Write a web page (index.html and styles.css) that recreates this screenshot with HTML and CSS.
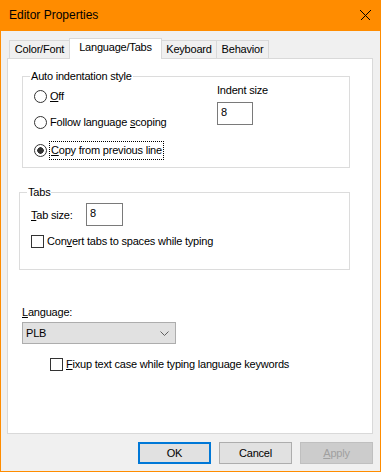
FILE: index.html
```html
<!DOCTYPE html>
<html lang="en">
<head>
  <meta charset="UTF-8" />
  <title>Editor Properties</title>
  <link rel="stylesheet" href="styles.css">
</head>
<body>
  <div class="window">
    <div class="titlebar">
      <span class="title">Editor Properties</span>
      <svg class="close" width="11" height="11" viewBox="0 0 11 11">
        <path d="M0.5 0.5L10.5 10.5M10.5 0.5L0.5 10.5" stroke="#000" stroke-width="1" shape-rendering="crispEdges" />
      </svg>
    </div>

    <div class="client">
      <div class="tabs">
        <div class="tab tab-color">Color/Font</div>
        <div class="tab tab-lang active">Language/Tabs</div>
        <div class="tab tab-kbd">Keyboard</div>
        <div class="tab tab-beh">Behavior</div>
      </div>

      <div class="panel">
        <fieldset class="group group-indent">
          <legend>Auto indentation style</legend>
          <div class="indent-body">
            <div class="radios">
              <div class="option"><span class="radio"></span><span class="opt-text"><u>O</u>ff</span></div>
              <div class="option"><span class="radio"></span><span class="opt-text">Follow language <u>s</u>coping</span></div>
              <div class="option option-last"><span class="radio checked"></span><span class="opt-text focused"><u>C</u>opy from previous line</span></div>
            </div>
            <div class="indent-size">
              <div class="label">Indent size</div>
              <div class="field">8</div>
            </div>
          </div>
        </fieldset>

        <fieldset class="group group-tabs">
          <legend>Tabs</legend>
          <div class="tabs-body">
            <div class="size-row">
              <span class="size-label"><u>T</u>ab size:</span>
              <div class="field">8</div>
            </div>
            <div class="check-row"><span class="checkbox"></span><span class="opt-text">Con<u>v</u>ert tabs to spaces while typing</span></div>
          </div>
        </fieldset>

        <div class="lang-label"><u>L</u>anguage:</div>
        <div class="select">
          <span>PLB</span>
          <svg width="9" height="5" viewBox="0 0 9 5">
            <path d="M0.5 0.5L4.5 4.5L8.5 0.5" fill="none" stroke="#606060" stroke-width="1" />
          </svg>
        </div>
        <div class="check-row fixup"><span class="checkbox"></span><span class="opt-text"><u>F</u>ixup text case while typing language keywords</span></div>
      </div>

      <div class="buttons">
        <div class="btn btn-default">OK</div>
        <div class="btn">Cancel</div>
        <div class="btn btn-disabled"><u>A</u>pply</div>
      </div>
    </div>
  </div>
</body>
</html>
```

FILE: styles.css
```css
* {
  box-sizing: border-box;
}

body {
  margin: 0;
  font-family: "Liberation Sans", Arial, sans-serif;
  font-size: 11px;
  letter-spacing: -0.2px;
  color: #000;
  background: #fff;
}

.window {
  width: 381px;
  height: 472px;
  display: flex;
  flex-direction: column;
  background: #f0f0f0;
  border: 1px solid #ff8c00;
  border-top: 0;
}

.titlebar {
  height: 31px;
  margin: 0 -1px;
  padding: 0 10px 0 9px;
  display: flex;
  align-items: center;
  justify-content: space-between;
  background: #ff8c00;
}

.title {
  font-size: 12px;
  line-height: 15px;
  letter-spacing: 0;
}

.close {
  display: block;
}

.client {
  flex: 1;
  display: flex;
  flex-direction: column;
  padding: 7px 7px 7px 6px;
}

/* tab strip */
.tabs {
  height: 20px;
  display: flex;
  align-items: flex-end;
  padding-left: 2px;
}

.tab {
  height: 18px;
  margin-left: -1px;
  border: 1px solid #d9d9d9;
  border-bottom: 0;
  background: #f0f0f0;
  text-align: center;
  line-height: 17px;
}

.tab:first-child {
  margin-left: 0;
}

.tab.active {
  height: 21px;
  margin-bottom: -1px;
  background: #fff;
  line-height: 16px;
  position: relative;
  z-index: 1;
}

.tab-color { width: 61px; }
.tab-lang { width: 93px; }
.tab-kbd { width: 56px; }
.tab-beh { width: 53px; }

.panel {
  flex: 1;
  background: #fff;
  border: 1px solid #d9d9d9;
  padding: 10px 22px 0 14px;
}

/* group boxes */
.group {
  margin: 0;
  padding: 0;
  min-width: 0;
  border: 1px solid #dcdcdc;
}

.group legend {
  margin-left: 7px;
  padding: 0 1px;
  line-height: 14px;
}

.group-indent {
  width: 328px;
}

.indent-body {
  height: 84px;
  display: grid;
  grid-template-columns: 183px auto;
  padding-left: 11px;
}

.option {
  height: 26px;
  display: flex;
  align-items: center;
}

.option-last {
  margin-top: 2px;
}

.radio {
  width: 13px;
  height: 13px;
  border: 1px solid #333;
  border-radius: 50%;
  background: #fff;
  flex-shrink: 0;
}

.radio.checked {
  background: radial-gradient(circle, #333 0 3px, #fff 3.5px);
}

.opt-text {
  margin-left: 3px;
  line-height: 14px;
  white-space: nowrap;
}

.opt-text.focused {
  margin-left: 2px;
  padding: 1px 1px 2px;
  border: 1px dotted #000;
}

.indent-size .label {
  line-height: 14px;
}

.field {
  width: 36px;
  height: 23px;
  margin-top: 5px;
  padding: 2px 0 0 3px;
  border: 1px solid #7a7a7a;
  background: #fff;
  line-height: 14px;
}

.group-tabs {
  width: 331px;
  margin: 17px 0 0 -3px;
}

.tabs-body {
  height: 70px;
  padding: 4px 0 0 11px;
}

.size-row {
  height: 23px;
  display: flex;
  align-items: center;
}

.size-label {
  width: 55px;
}

.size-row .field {
  width: 37px;
  margin-top: 0;
}

.check-row {
  height: 14px;
  margin-top: 8px;
  display: flex;
  align-items: center;
}

.checkbox {
  width: 13px;
  height: 13px;
  border: 1px solid #333;
  background: #fff;
  flex-shrink: 0;
}

/* language */
.lang-label {
  margin-top: 35px;
  line-height: 14px;
}

.select {
  width: 154px;
  height: 22px;
  margin-top: 3px;
  padding: 0 6px 0 3px;
  display: flex;
  align-items: center;
  justify-content: space-between;
  background: #e1e1e1;
  border: 1px solid #adadad;
}

.select svg {
  display: block;
}

.check-row.fixup {
  margin: 13px 0 0 28px;
}

/* dialog buttons */
.buttons {
  margin-top: 8px;
  display: flex;
  justify-content: flex-end;
  gap: 8px;
}

.btn {
  width: 73px;
  height: 22px;
  display: flex;
  align-items: center;
  justify-content: center;
  background: #e1e1e1;
  border: 1px solid #adadad;
}

.btn-default {
  border: 2px solid #0078d7;
}

.btn-disabled {
  background: #cccccc;
  border-color: #bfbfbf;
  color: #a0a0a0;
}
```
